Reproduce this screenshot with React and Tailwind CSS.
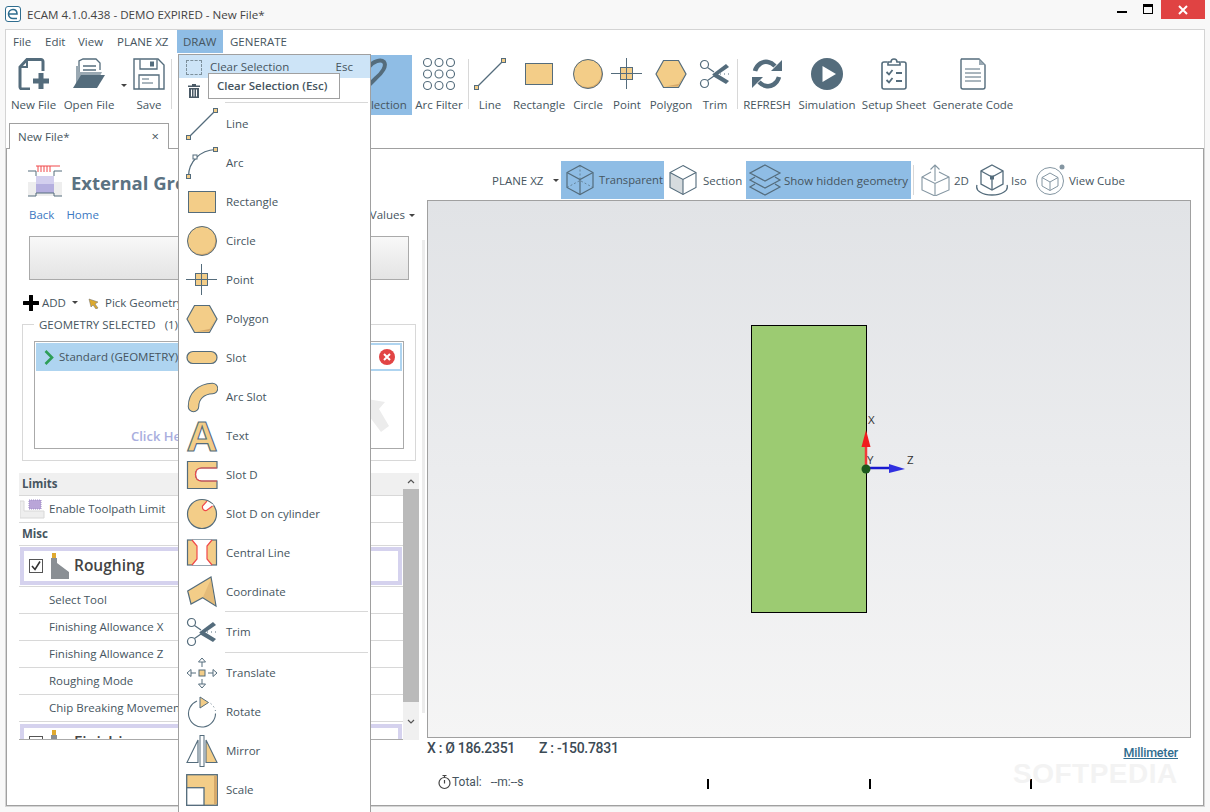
import React from 'react';

const LINE = '#546c7c';
const FILL = '#f3cd88';
const SHADE = '#d6a96a';
const RED = '#f0484a';

function Ico({ w = 32, h = 32, cls, children }) {
  return (
    <svg className={cls} width={w} height={h} viewBox={`0 0 ${w} ${h}`} fill="none" aria-hidden="true">
      {children}
    </svg>
  );
}

function Handle({ x, y, fill = FILL }) {
  return <rect x={x - 2} y={y - 2} width="4" height="4" fill={fill} stroke={LINE} />;
}

const LineIcon = () => (
  <Ico>
    <path d="M2.5 29.5L29.5 2.5" stroke={LINE} strokeWidth="1.2" />
    <Handle x={2.5} y={29.5} />
    <Handle x={29.5} y={2.5} />
  </Ico>
);

const ArcIcon = () => (
  <Ico>
    <path d="M2.5 29.5C2.5 15 14 3 29.5 2.5" stroke={LINE} strokeWidth="1.2" />
    <Handle x={2.5} y={29.5} />
    <Handle x={9} y={10} fill="#fff" />
    <Handle x={29.5} y={2.5} />
  </Ico>
);

const RectIcon = () => (
  <Ico>
    <rect x="2.5" y="5.5" width="27" height="21" fill={FILL} stroke={LINE} />
  </Ico>
);

const CircleIcon = () => (
  <Ico>
    <circle cx="16" cy="16" r="14.5" fill={SHADE} />
    <circle cx="15.4" cy="15.2" r="13.8" fill={FILL} />
    <circle cx="16" cy="16" r="14.5" stroke={LINE} />
  </Ico>
);

const PointIcon = () => (
  <Ico>
    <rect x="9.5" y="9.5" width="12" height="12" fill={FILL} stroke={LINE} />
    <path d="M0 15.5H31M15.5 0V31M9.5 15.5H21.5" stroke={LINE} />
  </Ico>
);

const PolygonIcon = () => (
  <Ico>
    <path d="M1 16L8.5 2.5H23.5L31 16L23.5 29.5H8.5Z" fill={FILL} stroke={LINE} strokeWidth="1.2" />
    <path d="M30 16L23 28.5H10L23.5 26Z" fill={SHADE} />
  </Ico>
);

const SlotIcon = () => (
  <Ico>
    <rect x="1" y="9.5" width="30" height="12" rx="6" fill={FILL} stroke={LINE} strokeWidth="1.2" />
  </Ico>
);

const ArcSlotIcon = () => (
  <Ico>
    <path d="M7.5 25.5C7.5 15 15 8 26.5 7.5" stroke={LINE} strokeWidth="11.5" strokeLinecap="round" />
    <path d="M7.5 25.5C7.5 15 15 8 26.5 7.5" stroke={FILL} strokeWidth="9.5" strokeLinecap="round" />
  </Ico>
);

const TextIcon = () => (
  <Ico cls="overflow-visible">
    <text x="16" y="31" textAnchor="middle" fontFamily="'Liberation Sans', sans-serif" fontWeight="700" fontSize="43" fill={FILL} stroke={LINE} strokeWidth="1.1">
      A
    </text>
  </Ico>
);

const SlotDIcon = () => (
  <Ico>
    <path d="M1.5 2.5H31V9H15.5C11.5 9 9.5 12 9.5 15.5C9.5 19 11.5 22 15.5 22H31V29.5H1.5Z" fill={FILL} stroke={LINE} strokeWidth="1.2" />
    <path d="M31 9H15.5C11.5 9 9.5 12 9.5 15.5C9.5 19 11.5 22 15.5 22H31" stroke={RED} strokeWidth="1.2" />
  </Ico>
);

const SlotCylIcon = () => (
  <Ico>
    <circle cx="16" cy="16" r="14.5" fill={FILL} stroke={LINE} strokeWidth="1.2" />
    <path d="M21 3L16.5 8C16 11 18 13 20.5 12.5L28 7Z" fill="#fff" />
    <path d="M21 3.2L16.5 8C16 11 18 13 20.5 12.5L26.5 8" stroke={RED} strokeWidth="1.2" />
  </Ico>
);

const CentralIcon = () => (
  <Ico>
    <rect x="1.5" y="3" width="29" height="25" fill={FILL} stroke={LINE} strokeWidth="1.2" />
    <path d="M6 3L11 9V22L6 28H26L21 22V9L26 3Z" fill="#fff" />
    <path d="M6 3L11 9V22L6 28M26 3L21 9V22L26 28" stroke={RED} strokeWidth="1.2" />
  </Ico>
);

const CoordIcon = () => (
  <Ico>
    <path d="M1.7 15L25 1L30 30L16.7 21.7L5 28Z" fill={FILL} stroke={LINE} strokeWidth="1.2" />
    <path d="M25 3L29 29L17 21Z" fill={SHADE} opacity="0.5" />
  </Ico>
);

const TrimIcon = () => (
  <Ico>
    <circle cx="5.5" cy="6.5" r="4" stroke={LINE} strokeWidth="1.2" />
    <circle cx="5.5" cy="25.5" r="4" stroke={LINE} strokeWidth="1.2" />
    <path d="M8.5 9.5L15 14M8.5 22.5L15 18" stroke={LINE} strokeWidth="1.2" />
    <path d="M13 16.5L27 6L30 9L17 18Z" fill={LINE} />
    <path d="M17 15L30 23L27 26L13.5 18Z" fill={LINE} />
    <path d="M21 16H31" stroke={LINE} strokeDasharray="1 3" />
  </Ico>
);

const TranslateIcon = () => (
  <Ico>
    <rect x="13" y="13" width="6" height="6" fill={FILL} stroke={LINE} />
    <path d="M16 1L19.5 5H12.5ZM16 5V10M16 31L19.5 27H12.5ZM16 27V22M1 16L5 12.5V19.5ZM5 16H10M31 16L27 12.5V19.5ZM27 16H22" stroke={LINE} fill="#fff" />
  </Ico>
);

const RotateIcon = () => (
  <Ico>
    <path d="M11 5A13.5 13.5 0 1 0 29.5 17.5" stroke={LINE} strokeWidth="1.1" />
    <path d="M29.5 15A13.5 13.5 0 0 0 24 7" stroke={LINE} strokeDasharray="1 3" />
    <path d="M14 1L22.5 6.5L14 12Z" fill={FILL} stroke={LINE} />
  </Ico>
);

const MirrorIcon = () => (
  <Ico>
    <path d="M1 27.5H12V5Z" fill="#fff" stroke={LINE} strokeWidth="1.1" />
    <rect x="14" y="0.5" width="4" height="31" fill="#fff" stroke={LINE} />
    <path d="M20 5V27.5H31Z" fill={FILL} stroke={LINE} strokeWidth="1.1" />
  </Ico>
);

const ScaleIcon = () => (
  <Ico>
    <rect x="0.7" y="0.7" width="30.6" height="30.6" fill={FILL} stroke={LINE} strokeWidth="1.3" />
    <rect x="28" y="2" width="3" height="28" fill={SHADE} />
    <rect x="0.7" y="13.7" width="17.3" height="17.6" fill="#fff" stroke={LINE} strokeWidth="1.3" />
  </Ico>
);

const NewFileIcon = () => (
  <Ico>
    <path d="M12 31H4C3 31 2 30 2 29V9L9 1.5H23C24 1.5 25 2.5 25 3.5V13" stroke={LINE} strokeWidth="3" />
    <path d="M9 2V9H2" stroke={LINE} strokeWidth="2" />
    <path d="M23 15V31M15 23H31" stroke={LINE} strokeWidth="5" />
  </Ico>
);

const OpenFileIcon = () => (
  <Ico w={36}>
    <path d="M8 22V3L12 1H25L29 5V12" fill="#fff" stroke={LINE} strokeWidth="1.3" />
    <path d="M12 8H25M12 12H25M12 16H25" stroke={LINE} strokeWidth="1.3" />
    <path d="M5 8V29H7L13 18H29L31 14H8V8Z" fill="#9aa9b3" />
    <path d="M2 30L10 17H34L26 30Z" fill={LINE} />
  </Ico>
);

const SaveIcon = () => (
  <Ico>
    <path d="M1 1H25L31 7V31H1Z" stroke={LINE} strokeWidth="1.4" fill="#fff" />
    <path d="M7 1.5V11H24V1.5" stroke={LINE} strokeWidth="1.3" />
    <rect x="17" y="3.5" width="4" height="5" fill={LINE} />
    <path d="M6 31V17H26V31" stroke={LINE} strokeWidth="1.3" />
    <path d="M9 21H16M9 25H20" stroke={LINE} />
  </Ico>
);

const LassoIcon = () => (
  <Ico>
    <path d="M14 24C8 22 8 16 13 9C17 3 25 1 28 4C31 8 26 15 20 20L12 28" stroke={LINE} strokeWidth="4" />
  </Ico>
);

const ArcFilterIcon = () => (
  <Ico>
    {[4.5, 16, 27.5].map((y) =>
      [4.5, 16, 27.5].map((x) => (
        <circle key={`${x}-${y}`} cx={x} cy={y} r="4" stroke={LINE} strokeWidth="1.1" />
      ))
    )}
  </Ico>
);

const RefreshIcon = () => (
  <Ico>
    <path d="M4 13C6 6 12 3 17 4C20 4.500 22 6 24 8" stroke={LINE} strokeWidth="4.500" />
    <path d="M20 13H31V2Z" fill={LINE} />
    <path d="M28 19C26 26 20 29 15 28C12 27.500 10 26 8 24" stroke={LINE} strokeWidth="4.500" />
    <path d="M12 19H1V30Z" fill={LINE} />
  </Ico>
);

const PlayIcon = () => (
  <Ico>
    <circle cx="16" cy="16" r="16" fill={LINE} />
    <path d="M11.5 8L25 16L11.5 24Z" fill="#fff" />
  </Ico>
);

const SetupIcon = () => (
  <Ico>
    <path d="M9 4H6C5 4 4 5 4 6V29C4 30 5 31 6 31H26C27 31 28 30 28 29V6C28 5 27 4 26 4H23" stroke={LINE} strokeWidth="1.6" />
    <path d="M10 7V4H13C13 2 14.5 1 16 1C17.500 1 19 2 19 4H22V7Z" stroke={LINE} strokeWidth="1.6" fill="#fff" />
    <path d="M8.500 14L11 16.500L14.500 12M8.500 22L11 24.500L14.500 20" stroke={LINE} strokeWidth="1.8" />
    <path d="M18 15H24M18 23H24" stroke={LINE} strokeWidth="1.8" />
  </Ico>
);

const CodeIcon = () => (
  <Ico>
    <path d="M4.500 1H22L28 7V29C28 30 27 31 26 31H6C5 31 4 30 4 29V2Z" stroke={LINE} strokeWidth="1.4" />
    <path d="M22 1V7H28Z" fill="#9aa9b3" />
    <path d="M8 11H23M8 15H24M8 19H24M8 23H24" stroke={LINE} />
  </Ico>
);

const TrashIcon = () => (
  <svg width="12" height="15" viewBox="0 0 12 15" aria-hidden="true">
    <path d="M4 1H8V2.500H12V4H0V2.500H4Z" fill="#4a5a66" />
    <path d="M1 5H11V15H1Z" fill="#4a5a66" />
    <path d="M3.500 6.500V13.500M6 6.500V13.500M8.500 6.500V13.500" stroke="#fff" />
  </svg>
);

const CUBE = 'M14 1.500L27 8.500V23.500L14 30.500L1 23.500V8.500Z';

const TransparentIcon = () => (
  <Ico w={30}>
    <path d={CUBE} stroke={LINE} strokeWidth="1.2" />
    <path d="M1 8.500L14 15.500L27 8.500M14 15.500V30.500" stroke={LINE} strokeWidth="1.2" />
    <path d="M14 1.500V15.500M1 23.500L14 16.500L27 23.500" stroke={LINE} strokeDasharray="2 2" opacity="0.7" />
  </Ico>
);

const SectionIcon = () => (
  <Ico w={30}>
    <path d="M1 8.500L14 15.500V30.500L1 23.500Z" fill="#d6dbde" />
    <path d={CUBE} stroke={LINE} strokeWidth="1.1" />
    <path d="M1 8.500L14 15.500L27 8.500M14 15.500V30.500" stroke={LINE} strokeWidth="1.1" />
  </Ico>
);

const LayersIcon = () => (
  <Ico w={34}>
    <path d="M17 1L32 9L17 17L2 9Z" stroke={LINE} strokeWidth="1.2" />
    <path d="M7 13L2 16L17 24L32 16L27 13M7 20L2 23L17 31L32 23L27 20" stroke={LINE} strokeWidth="1.2" />
  </Ico>
);

const TwoDIcon = () => (
  <Ico w={30}>
    <path d="M10 8L1 13V26L14 32L28 26V13L18 8" stroke="#8496a2" strokeWidth="1.1" />
    <path d="M1 13L14 19.500L28 13M14 19.500V32" stroke="#8496a2" strokeWidth="1.1" />
    <path d="M14 17V1M9.500 5.500L14 1L18.500 5.500" stroke="#8496a2" strokeWidth="1.1" />
  </Ico>
);

const IsoIcon = () => (
  <Ico w={34}>
    <path d="M17 1L28 7V20L17 26L6 20V7Z" stroke={LINE} strokeWidth="1.3" />
    <path d="M6 7L17 13L28 7M17 13V26" stroke={LINE} strokeWidth="1.3" />
    <rect x="15" y="11.500" width="4" height="4" fill={LINE} />
    <path d="M2 21C0 27 8 31 17 31C26 31 34 27 32 21" stroke={LINE} strokeWidth="1.3" />
  </Ico>
);

const ViewCubeIcon = () => (
  <Ico w={32}>
    <circle cx="14" cy="17" r="13.5" stroke="#8496a2" />
    <path d="M14 9L22 13.500V22L14 26.500L6 22V13.500Z" stroke="#8496a2" />
    <path d="M6 13.500L14 18L22 13.500M14 18V26.500" stroke="#8496a2" />
    <circle cx="26" cy="3" r="2.500" fill="#8496a2" />
  </Ico>
);

const MENU_TABS = [
  { label: 'File', cls: 'w-[32px] pl-[6px]' },
  { label: 'Edit', cls: 'w-[33px] pl-[6px]' },
  { label: 'View', cls: 'w-[39px] pl-[6px]' },
  { label: 'PLANE XZ', cls: 'w-[66px] pl-[6px]' },
  { label: 'DRAW', cls: 'w-[46px] pl-[6px] bg-[#8fbde5]' },
  { label: 'GENERATE', cls: 'w-[80px] pl-[7px]' },
];

const DRAW_GROUP = [
  { label: 'Line', Icon: LineIcon },
  { label: 'Arc', Icon: ArcIcon },
  { label: 'Rectangle', Icon: RectIcon },
  { label: 'Circle', Icon: CircleIcon },
  { label: 'Point', Icon: PointIcon },
  { label: 'Polygon', Icon: PolygonIcon },
  { label: 'Slot', Icon: SlotIcon },
  { label: 'Arc Slot', Icon: ArcSlotIcon },
  { label: 'Text', Icon: TextIcon },
  { label: 'Slot D', Icon: SlotDIcon },
  { label: 'Slot D on cylinder', Icon: SlotCylIcon },
  { label: 'Central Line', Icon: CentralIcon },
  { label: 'Coordinate', Icon: CoordIcon },
];

const EDIT_GROUP = [
  { label: 'Translate', Icon: TranslateIcon },
  { label: 'Rotate', Icon: RotateIcon },
  { label: 'Mirror', Icon: MirrorIcon },
  { label: 'Scale', Icon: ScaleIcon },
];

const SHAPE_TOOLS = [
  { label: 'Line', Icon: LineIcon, cls: 'w-[40px]' },
  { label: 'Rectangle', Icon: RectIcon, cls: 'w-[58px]' },
  { label: 'Circle', Icon: CircleIcon, cls: 'w-[40px]' },
  { label: 'Point', Icon: PointIcon, cls: 'w-[38px]' },
  { label: 'Polygon', Icon: PolygonIcon, cls: 'w-[50px]' },
  { label: 'Trim', Icon: TrimIcon, cls: 'w-[38px]' },
];

const RUN_TOOLS = [
  { label: 'REFRESH', Icon: RefreshIcon, cls: 'w-[54px]' },
  { label: 'Simulation', Icon: PlayIcon, cls: 'w-[66px]' },
  { label: 'Setup Sheet', Icon: SetupIcon, cls: 'w-[68px]' },
  { label: 'Generate Code', Icon: CodeIcon, cls: 'w-[90px]' },
];

const ROUGHING_ROWS = [
  'Select Tool',
  'Finishing Allowance X',
  'Finishing Allowance Z',
  'Roughing Mode',
  'Chip Breaking Movement',
];

function Tool({ label, Icon, cls = '' }) {
  return (
    <div className={`flex h-[60px] shrink-0 flex-col items-center whitespace-nowrap ${cls}`}>
      <div className="mt-[3px] flex h-[32px] items-center justify-center">
        <Icon />
      </div>
      <span className="mt-[7px] h-[16px] leading-[16px]">{label}</span>
    </div>
  );
}

function Sep({ cls }) {
  return (
    <div className={`flex h-[54px] shrink-0 justify-center pt-[4px] ${cls}`}>
      <div className="h-full w-px bg-[#d8d8d8]" />
    </div>
  );
}

function Caret() {
  return <span className="inline-block h-0 w-0 border-x-[3px] border-t-[3px] border-x-transparent border-t-[#444]" />;
}

function MenuRow({ label, Icon, cls = 'h-[39px]' }) {
  return (
    <div className={`flex items-center pl-[7px] ${cls}`}>
      <div className="flex w-[32px] justify-center">
        <Icon />
      </div>
      <span className="ml-[8px]">{label}</span>
    </div>
  );
}

function DrawMenu() {
  return (
    <div className="absolute left-[178px] top-[54px] z-20 h-[770px] w-[193px] border border-[#a0a0a0] bg-white">
      <div className="flex h-[23px] items-center bg-[#cde4f7] pl-[7px] pt-px">
        <span className="h-[15px] w-[16px] border border-dashed border-[#7d909c]" />
        <span className="ml-[8px]">Clear Selection</span>
        <span className="ml-auto mr-[17px]">Esc</span>
      </div>
      <div className="flex h-[24px] items-center pl-[9px]">
        <TrashIcon />
      </div>
      <div className="mb-px ml-[46px] mr-[2px] h-px bg-[#d8d8d8]" />
      {DRAW_GROUP.map((item) => (
        <MenuRow key={item.label} {...item} />
      ))}
      <div className="ml-[46px] mr-[2px] h-px bg-[#d8d8d8]" />
      <MenuRow label="Trim" Icon={TrimIcon} cls="h-[40px]" />
      <div className="ml-[46px] mr-[2px] h-px bg-[#d8d8d8]" />
      {EDIT_GROUP.map((item) => (
        <MenuRow key={item.label} {...item} />
      ))}
    </div>
  );
}

function TitleBar() {
  return (
    <div className="flex h-[29px] shrink-0 bg-[#f8f8f8]">
      <svg className="ml-[5px] mt-[6px]" width="16" height="16" viewBox="0 0 16 16" aria-hidden="true">
        <rect x="0.500" y="0.500" width="15" height="15" rx="2.500" fill="#fff" stroke="#2f6d8f" />
        <path d="M3.500 8H12C12 5 10.500 3.500 8 3.500C5.500 3.500 3.500 5.500 3.500 8C3.500 10.500 5.500 12.500 8 12.500H12" fill="none" stroke="#2f6d8f" strokeWidth="1.600" />
      </svg>
      <span className="ml-[6px] mt-[6px] text-[11.6px] leading-[18px] text-[#444]">ECAM 4.1.0.438 - DEMO EXPIRED - New File*</span>
      <div className="ml-auto flex h-[19px] items-start">
        <span className="mt-[11px] h-[2px] w-[10px] bg-black" />
        <span className="ml-[16px] mt-[4px] h-[10px] w-[10px] border border-t-[3px] border-black" />
        <div className="ml-[8px] mr-[5px] flex h-[19px] w-[44px] items-center justify-center bg-[#e04343]">
          <svg width="10" height="10" viewBox="0 0 10 10" aria-hidden="true">
            <path d="M1 1L9 9M9 1L1 9" stroke="#fff" strokeWidth="2" />
          </svg>
        </div>
      </div>
    </div>
  );
}

function MainToolbar() {
  return (
    <div className="flex h-[68px] shrink-0 items-start">
      <Tool label="New File" Icon={NewFileIcon} cls="w-[55px]" />
      <Tool label="Open File" Icon={OpenFileIcon} cls="w-[56px]" />
      <div className="flex h-[60px] w-[13px] shrink-0 justify-center pt-[29px]">
        <Caret />
      </div>
      <Tool label="Save" Icon={SaveIcon} cls="w-[38px]" />
      <Sep cls="w-[6px]" />
      <div className="w-[176px] shrink-0" />
      <div className="flex h-[60px] w-[62px] shrink-0 flex-col items-center whitespace-nowrap bg-[#8fbde5]">
        <div className="mt-[3px] flex h-[32px] w-full justify-start pl-[6px]">
          <LassoIcon />
        </div>
        <span className="mt-[7px] h-[16px] pl-[3px] leading-[16px]">Selection</span>
      </div>
      <Tool label="Arc Filter" Icon={ArcFilterIcon} cls="w-[54px]" />
      <Sep cls="w-[4px]" />
      {SHAPE_TOOLS.map((tool) => (
        <Tool key={tool.label} {...tool} />
      ))}
      <Sep cls="w-[6px]" />
      {RUN_TOOLS.map((tool) => (
        <Tool key={tool.label} {...tool} />
      ))}
    </div>
  );
}

function GeometryBox() {
  return (
    <div className="relative ml-[15px] mt-[13px] h-[137px] w-[394px] shrink-0 border border-[#d8d8d8]">
      <span className="absolute left-[11px] top-[-8px] whitespace-nowrap bg-white px-[5px] leading-[16px]">
        GEOMETRY SELECTED &nbsp;&nbsp;(1)
      </span>
      <div className="relative ml-[11px] mt-[16px] h-[108px] w-[370px] border border-[#aaa] p-px">
        <div className="flex h-[28px]">
          <div className="flex w-[335px] shrink-0 items-center bg-[#aed4f0] pl-[8px]">
            <svg width="10" height="15" viewBox="0 0 10 15" aria-hidden="true">
              <path d="M1.500 1L8 7.500L1.500 14" fill="none" stroke="#2e9e57" strokeWidth="2.600" />
            </svg>
            <span className="ml-[5px]">Standard (GEOMETRY)</span>
          </div>
          <div className="flex flex-1 items-center justify-end border-y-2 border-r-2 border-[#aed4f0] pr-[5px]">
            <svg width="16" height="16" viewBox="0 0 16 16" aria-hidden="true">
              <circle cx="8" cy="8" r="8" fill="#e24444" />
              <path d="M5 5L11 11M11 5L5 11" stroke="#fff" strokeWidth="2" />
            </svg>
          </div>
        </div>
        <svg className="absolute left-[320px] top-[52px]" width="36" height="42" viewBox="0 0 36 42" aria-hidden="true">
          <path d="M6 4L30 8L24 15L34 32L26 38L14 22L7 28Z" fill="#ececec" />
        </svg>
        <span className="absolute left-[96px] top-[85px] whitespace-nowrap text-[13px] font-semibold text-[#a9aede]">Click Here</span>
      </div>
    </div>
  );
}

function PropertyTable() {
  return (
    <div className="ml-[12px] mt-[12px] flex h-[267px] w-[400px] shrink-0">
      <div className="h-full w-[384px] overflow-hidden border-b border-[#aaa]">
        <div className="flex h-[23px] items-center border-b border-[#d8d8d8] bg-[#f0f0f0] pl-[3px] font-bold">Limits</div>
        <div className="flex h-[27px] items-center border-b border-[#d8d8d8]">
          <svg className="ml-px" width="25" height="20" viewBox="0 0 25 20" aria-hidden="true">
            <path d="M0 19V2H4V12H24V19Z" fill="#eeeeee" stroke="#d8d8d8" />
            <rect x="9" y="1" width="12" height="9" fill="#b9a5d8" stroke="#9d8bc4" strokeDasharray="1 1" />
          </svg>
          <span className="ml-[4px]">Enable Toolpath Limit</span>
        </div>
        <div className="flex h-[23px] items-center border-b border-[#d8d8d8] pl-[3px] font-bold">Misc</div>
        <div className="h-[41px] border-b border-[#d8d8d8] p-px">
          <div className="flex h-[38px] items-center border-4 border-[#d5d2ee]">
            <span className="ml-[5px] flex h-[14px] w-[14px] items-center justify-center border border-[#555]">
              <svg width="12" height="12" viewBox="0 0 12 12" aria-hidden="true">
                <path d="M2 6L5 9.500L10 1.500" fill="none" stroke="#333" strokeWidth="1.600" />
              </svg>
            </span>
            <svg className="ml-[8px]" width="19" height="26" viewBox="0 0 19 26" aria-hidden="true">
              <rect x="1" y="0" width="4" height="5" fill="#e0a92e" />
              <path d="M0 5H6V10L18 19V26H0Z" fill="#8a8f94" />
            </svg>
            <span className="ml-[4px] text-[15.5px] font-semibold text-[#444]">Roughing</span>
          </div>
        </div>
        {ROUGHING_ROWS.map((label) => (
          <div key={label} className="flex h-[27px] items-center whitespace-nowrap border-b border-[#d8d8d8] pl-[30px]">
            {label}
          </div>
        ))}
        <div className="mx-px mt-[2px] flex h-[38px] items-center border-4 border-[#d5d2ee]">
          <span className="ml-[5px] h-[14px] w-[14px] border border-[#555]" />
          <svg className="ml-[8px]" width="19" height="26" viewBox="0 0 19 26" aria-hidden="true">
            <rect x="1" y="0" width="4" height="5" fill="#e0a92e" />
            <path d="M0 5H6V10L18 19V26H0Z" fill="#8a8f94" />
          </svg>
          <span className="ml-[4px] text-[15.5px] font-semibold text-[#444]">Finishing</span>
        </div>
      </div>
      <div className="flex h-full w-[16px] flex-col bg-[#f0f0f0]">
        <div className="flex h-[16px] items-center justify-center">
          <svg width="8" height="5" viewBox="0 0 8 5" aria-hidden="true">
            <path d="M1 4L4 1L7 4" fill="none" stroke="#555" strokeWidth="1.200" />
          </svg>
        </div>
        <div className="h-[213px] bg-[#bababa]" />
        <div className="flex flex-1 items-center justify-center">
          <svg width="8" height="5" viewBox="0 0 8 5" aria-hidden="true">
            <path d="M1 1L4 4L7 1" fill="none" stroke="#555" strokeWidth="1.200" />
          </svg>
        </div>
      </div>
    </div>
  );
}

function LeftPanel() {
  return (
    <div className="relative flex w-[420px] shrink-0 flex-col">
      <div className="ml-[21px] mt-[16px] flex h-[32px] shrink-0 items-center">
        <svg width="34" height="32" viewBox="0 0 34 32" aria-hidden="true">
          <path d="M0 17H34V31H0Z" fill="#eeeeee" />
          <rect x="8" y="11" width="18" height="8" fill="#d3cfee" />
          <rect x="8" y="19" width="18" height="9" fill="#b5afdf" />
          <path d="M0 6H8V11M26 11V6H34M0 31H8V28H26V31H34" fill="none" stroke={LINE} />
          <path d="M8 1H32M10 1V7M13 1V7M16 1V7M19 1V7M22 1V7" stroke={RED} />
        </svg>
        <span className="ml-[9px] mt-[3px] whitespace-nowrap text-[18.5px] font-bold text-[#5b7282]">External Grooving</span>
      </div>
      <div className="mt-[9px] flex h-[18px] shrink-0 items-center pl-[22px] pr-[12px]">
        <span className="text-[#3b78c2]">Back</span>
        <span className="ml-[12px] text-[#3b78c2]">Home</span>
        <span className="ml-auto mr-[4px]">Values</span>
        <Caret />
      </div>
      <div className="ml-[22px] mt-[12px] h-[44px] w-[380px] shrink-0 border border-[#aaa] bg-gradient-to-b from-[#f8f8f8] to-[#e4e4e4]" />
      <div className="ml-[16px] mt-[14px] flex h-[17px] shrink-0 items-center">
        <svg width="16" height="16" viewBox="0 0 16 16" aria-hidden="true">
          <path d="M8 1V15M1 8H15" stroke="#000" strokeWidth="4" strokeLinecap="round" />
        </svg>
        <span className="ml-[3px]">ADD</span>
        <span className="ml-[6px] flex">
          <Caret />
        </span>
        <svg className="ml-[10px]" width="12" height="13" viewBox="0 0 12 13" aria-hidden="true">
          <path d="M1 3L10 6L7 8L10 12L8 13L5 9L3 11Z" fill="#dba92f" stroke="#6b6b6b" strokeWidth="0.500" />
        </svg>
        <span className="ml-[5px] whitespace-nowrap">Pick Geometry</span>
      </div>
      <GeometryBox />
      <PropertyTable />
      <div className="absolute left-[415px] top-[91px] h-[473px] w-[3px] bg-[#ececec]" />
    </div>
  );
}

function Viewport() {
  return (
    <div className="relative h-[538px] w-[764px] shrink-0 overflow-hidden border border-[#a0a0a0] bg-gradient-to-b from-[#e1e3e6] via-[#ebecee] to-[#f5f5f5]">
      <div className="absolute left-[323px] top-[124px] h-[288px] w-[116px] border border-black bg-[#9ccb72]" />
      <svg className="absolute left-[422px] top-[224px]" width="60" height="60" viewBox="0 0 60 60" aria-hidden="true">
        <path d="M16 43V18" stroke="#f23a3a" strokeWidth="2.500" />
        <path d="M16 5L11.500 22H20.500Z" fill="#f01c1c" />
        <path d="M16 43H42" stroke="#1818d0" strokeWidth="2.500" />
        <path d="M55 44L39 39V48Z" fill="#3030e0" />
        <circle cx="16" cy="44" r="4.500" fill="#1d5a1d" />
      </svg>
      <span className="absolute left-[440px] top-[211px] leading-[16px] text-[#333]">X</span>
      <span className="absolute left-[439px] top-[251px] leading-[16px] text-[#333]">Y</span>
      <span className="absolute left-[479px] top-[251px] leading-[16px] text-[#333]">Z</span>
    </div>
  );
}

function ViewToolbar() {
  return (
    <div className="flex h-[38px] shrink-0 items-center whitespace-nowrap">
      <span className="ml-[65px] mt-px w-[61px]">PLANE XZ</span>
      <span className="flex w-[8px]">
        <Caret />
      </span>
      <div className="flex h-[38px] w-[103px] items-center bg-[#8fbde5] pl-[5px]">
        <TransparentIcon />
        <span className="ml-[3px] mt-px text-[11.2px]">Transparent</span>
      </div>
      <div className="ml-[5px] flex h-[38px] w-[77px] items-center">
        <SectionIcon />
        <span className="ml-[4px] mt-px">Section</span>
      </div>
      <div className="flex h-[38px] w-[165px] items-center bg-[#8fbde5] pl-[2px]">
        <LayersIcon />
        <span className="ml-[2px] mt-px">Show hidden geometry</span>
      </div>
      <div className="ml-[2px] h-[30px] w-px bg-[#d8d8d8]" />
      <div className="ml-[7px] flex w-[55px] items-center">
        <TwoDIcon />
        <span className="ml-[3px] mt-px">2D</span>
      </div>
      <div className="ml-[-1px] flex w-[60px] items-center">
        <IsoIcon />
        <span className="ml-[2px] mt-px">Iso</span>
      </div>
      <div className="ml-px flex items-center">
        <ViewCubeIcon />
        <span className="ml-[1px] mt-px">View Cube</span>
      </div>
    </div>
  );
}

function RightPanel() {
  return (
    <div className="relative flex flex-1 flex-col pt-[12px]">
      <ViewToolbar />
      <div className="mt-px">
        <Viewport />
      </div>
      <div className="flex h-[25px] w-[751px] shrink-0 items-start justify-between">
        <div className="flex pt-[1px] font-['Roboto',sans-serif] text-[14px] font-medium leading-[18px] tracking-[-0.3px] text-[#3c4a55]">
          <span className="w-[112px]">X : Ø 186.2351</span>
          <span>Z : -150.7831</span>
        </div>
        <span className="pt-[7px] font-['Roboto',sans-serif] text-[12.5px] font-medium leading-[16px] tracking-[-0.2px] text-[#2f6d8f] underline">Millimeter</span>
      </div>
      <div className="flex h-[30px] items-center">
        <div className="flex w-[280px] shrink-0 items-center pl-[11px] pt-[8px] font-['Roboto',sans-serif]">
          <svg width="13" height="16" viewBox="0 0 13 16" aria-hidden="true">
            <circle cx="6.500" cy="9" r="5.500" fill="none" stroke="#444" strokeWidth="1.200" />
            <path d="M4.500 1.500H8.500M6.500 1.500V3.500M6.500 6V9.500" stroke="#444" strokeWidth="1.200" />
          </svg>
          <span className="ml-[1px] whitespace-nowrap text-[12px]">Total: &nbsp;&nbsp;--m:--s</span>
        </div>
        <span className="mt-[12px] h-[10px] w-[2px] bg-black" />
        <span className="ml-[160px] mt-[12px] h-[10px] w-[2px] bg-black" />
        <span className="ml-[159px] mt-[12px] h-[10px] w-[2px] bg-black" />
      </div>
      <span className="absolute left-[586px] top-[612px] font-['Liberation_Sans',sans-serif] text-[28px] font-bold leading-[26px] tracking-[0.5px] text-[#f3f3f3]">
        SOFTPEDIA
      </span>
    </div>
  );
}

export default function App() {
  return (
    <div className="relative flex h-[812px] w-[1210px] flex-col overflow-hidden bg-[#f8f8f8] font-['Open_Sans',sans-serif] text-[11.5px] text-[#465560]">
      <TitleBar />
      <div className="mx-[5px] mb-[5px] flex flex-1 flex-col border border-[#d4d4d4] bg-white">
        <div className="flex h-[25px] shrink-0 pl-px">
          {MENU_TABS.map((tab) => (
            <div key={tab.label} className={`flex h-[23px] items-center whitespace-nowrap pt-px ${tab.cls}`}>
              {tab.label}
            </div>
          ))}
        </div>
        <MainToolbar />
        <div className="h-[25px] shrink-0 pl-[3px]">
          <div className="relative z-10 flex h-[26px] w-[160px] items-center justify-between border-x border-t border-[#a0a0a0] bg-white pl-[8px] pr-[9px]">
            <span>New File*</span>
            <span className="text-[13px] leading-none">×</span>
          </div>
        </div>
        <div className="flex flex-1 border border-[#a0a0a0]">
          <LeftPanel />
          <RightPanel />
        </div>
      </div>
      <DrawMenu />
      <div className="absolute left-[208px] top-[73px] z-30 flex h-[26px] w-[132px] items-center whitespace-nowrap border border-[#a0a0a0] bg-white pl-[8px] font-semibold">
        Clear Selection (Esc)
      </div>
    </div>
  );
}
